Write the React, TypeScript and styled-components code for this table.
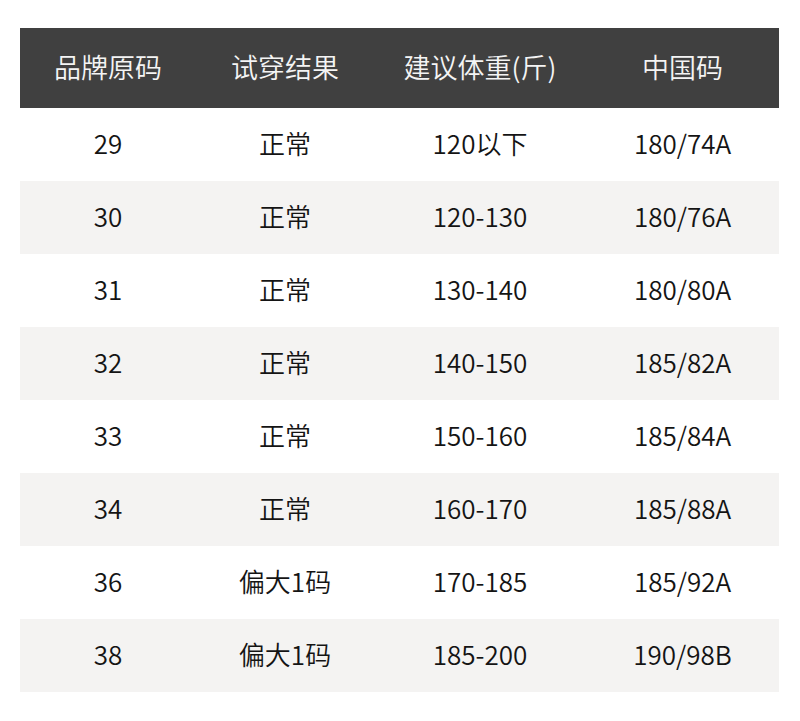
import React from 'react'
import styled, { createGlobalStyle } from 'styled-components'

const GlobalStyle = createGlobalStyle`
    body {
        margin: 0;
        background: #ffffff;
        font-family: "Noto Sans CJK SC", "Noto Sans", sans-serif;
    }
`

const Page = styled.div`
    padding: 28px 21px 29px 20px;
`

const Table = styled.div`
    display: grid;
    grid-template-columns: 176px 178px 212px 193px;
`

const Row = styled.div<{ $shaded?: boolean }>`
    display: contents;

    & > div {
        background: ${({ $shaded }) => ($shaded ? '#f4f3f2' : '#ffffff')};
    }
`

const HeadCell = styled.div`
    height: 80px;
    padding-bottom: 3px;
    box-sizing: border-box;
    display: flex;
    align-items: center;
    justify-content: center;
    background: #404040;
    color: #f4f4f4;
    font-size: 27px;
    font-weight: 350;
`

const Cell = styled.div`
    height: 73px;
    padding-bottom: 5px;
    box-sizing: border-box;
    display: flex;
    align-items: center;
    justify-content: center;
    color: #141414;
    font-size: 26px;
    font-weight: 350;
`

const headers = ['品牌原码', '试穿结果', '建议体重(斤)', '中国码']

const rows = [
    ['29', '正常', '120以下', '180/74A'],
    ['30', '正常', '120-130', '180/76A'],
    ['31', '正常', '130-140', '180/80A'],
    ['32', '正常', '140-150', '185/82A'],
    ['33', '正常', '150-160', '185/84A'],
    ['34', '正常', '160-170', '185/88A'],
    ['36', '偏大1码', '170-185', '185/92A'],
    ['38', '偏大1码', '185-200', '190/98B'],
]

export default function App() {
    return (
        <>
            <GlobalStyle />
            <Page>
                <Table>
                    {headers.map(h => (
                        <HeadCell key={h}>{h}</HeadCell>
                    ))}
                    {rows.map((r, i) => (
                        <Row key={r[0]} $shaded={i % 2 === 1}>
                            {r.map((c, j) => (
                                <Cell key={j}>{c}</Cell>
                            ))}
                        </Row>
                    ))}
                </Table>
            </Page>
        </>
    )
}
